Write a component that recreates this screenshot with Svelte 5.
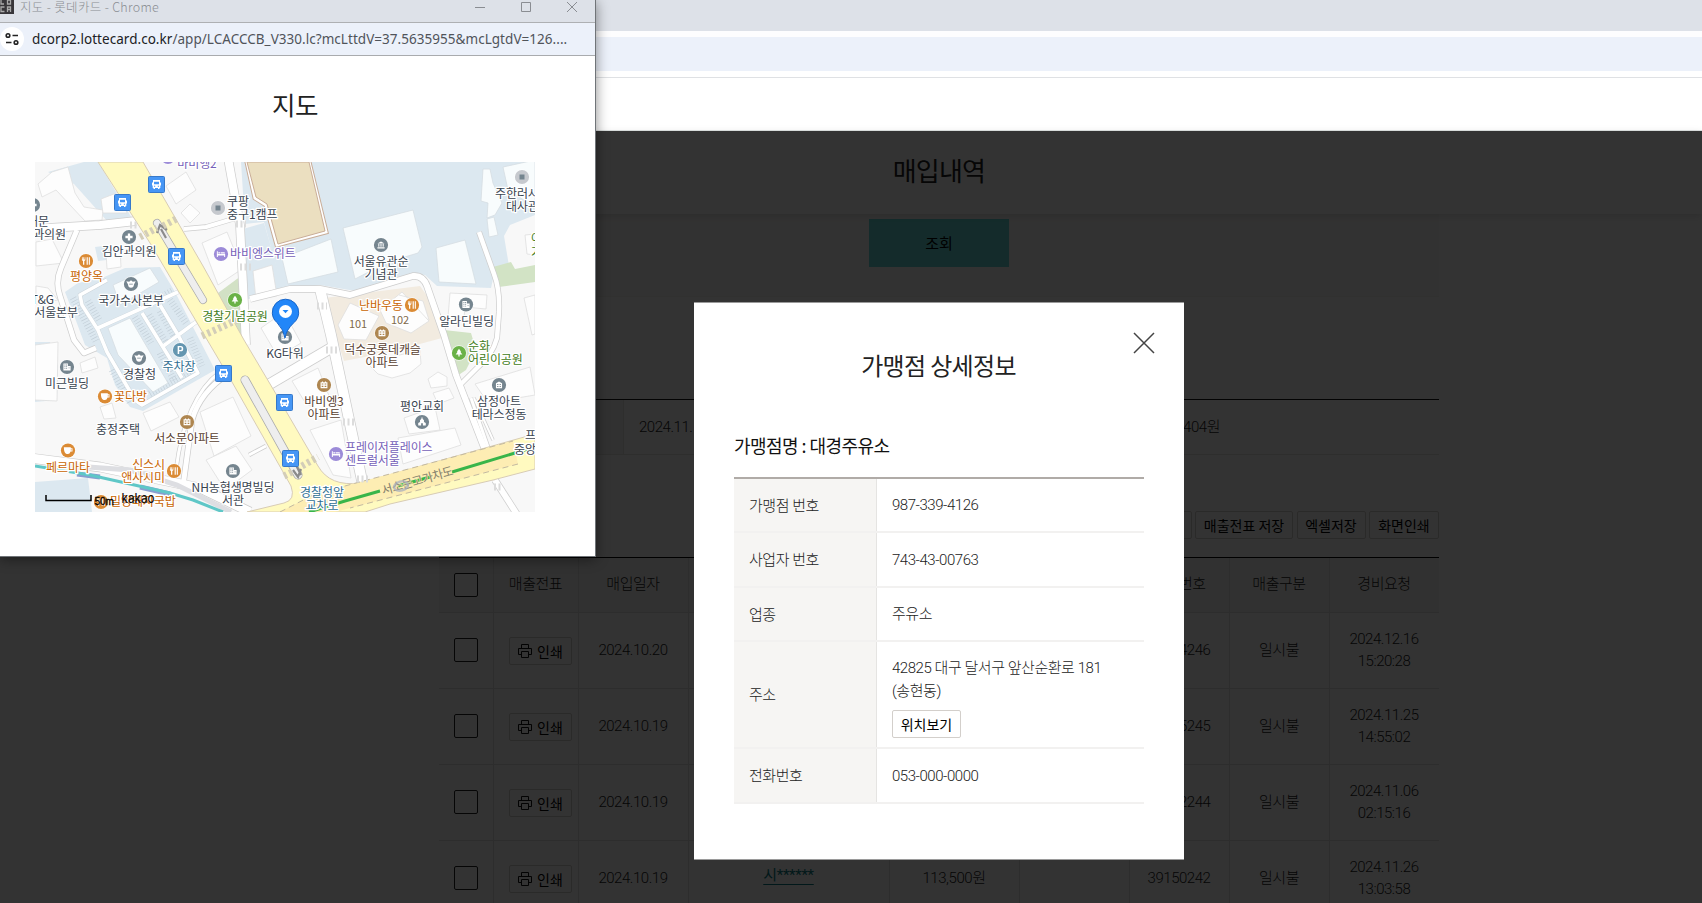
<script>
  const info = [
    ['가맹점 번호', '987-339-4126'],
    ['사업자 번호', '743-43-00763'],
    ['업종', '주유소']
  ];

  const rows = [
    { date: '2024.10.20', name: '', amount: '', no: '39154246', day: '2024.12.16', time: '15:20:28' },
    { date: '2024.10.19', name: '', amount: '', no: '39155245', day: '2024.11.25', time: '14:55:02' },
    { date: '2024.10.19', name: '', amount: '', no: '39152244', day: '2024.11.06', time: '02:15:16' },
    { date: '2024.10.19', name: '시******', amount: '113,500원', no: '39150242', day: '2024.11.26', time: '13:03:58' }
  ];

  const minor = [
    ['M228 158L240 225L246 345', 8],
    ['M30 229L100 225L136 221', 8],
    ['M77 230L61 268Q55 282 60 296L74 340L84 353L96 348', 5],
    ['M184 229L206 227L236 218', 4],
    ['M250 299L290 289L320 289L350 295L413 276Q423 275 427 286L444 335L456 375L485 450', 6],
    ['M320 289L331 335L364 490', 10],
    ['M479 232L494 274Q500 290 499 312L497 338Q492 356 478 367L460 385', 4.5],
    ['M268 385L331 348', 10],
    ['M30 458L100 467L200 488L250 512', 9],
    ['M228 374Q200 392 192 420L183 486', 5],
    ['M220 372Q185 398 176 470', 3],
    ['M495 480L518 516', 6],
    ['M471 398L488 447', 3],
    ['M474 398L493 440', 2],
    ['M249 455L266 446', 3]
  ];

  const buildings = [
    '38,184 52,172 68,167 75,193 84,207 103,210 102,220 85,221 56,190 42,197',
    '101,199 119,192 127,213 103,213', '166,186 186,172 196,190 176,204', '181,213 190,204 200,213 190,223',
    '202,243 227,232 242,269 218,285', '253,271 272,265 277,296 256,300', '106,252 120,249 121,267 107,269',
    '36,242 52,239 64,263 36,266', '36,286 48,288 58,300 36,304', '80,363 95,357 98,368 82,373',
    '100,407 112,403 116,418 104,419', '143,413 170,402 179,417 151,431', '200,412 233,397 251,436 214,456',
    '206,460 236,446 252,470 225,490', '261,328 284,312 301,343 278,357', '292,381 318,368 337,416 306,404',
    '310,430 341,420 351,478 333,475', '428,379 438,372 447,377 447,386 431,388', '433,393 449,388 454,398 438,404',
    '404,418 435,407 440,430 409,434', '398,438 455,428 461,445 403,464', '475,384 530,367 535,395 488,403',
    '450,293 487,295 486,309 465,307 464,318 448,317', '524,298 535,295 535,334 532,335',
    '367,363 420,350 421,364 410,373 392,378 378,374', '35,345 58,342 57,401 35,400', '525,235 535,234 535,255 527,254'
  ];

  const paleBuildings = [
    '343,228 413,210 422,247 418,253 388,262 355,279', '282,258 331,239 338,272 288,284',
    '436,248 465,240 476,284 439,282', '483,169 490,169 493,183 502,203 495,215 487,218 488,203 481,201',
    '487,219 494,217 498,235 489,237', '503,167 535,160 535,207 508,190', '113,285 150,268 159,282 120,305',
    '108,328 130,318 168,383 153,392 118,355'
  ];

  const labels = [
    ['바비엥2', 197, 168, 'p', 'm'],
    ['쿠팡', 227, 206, 'g', 's'], ['중구1캠프', 227, 219, 'g', 's'],
    ['대문', 49, 226, 'g', 'e'], ['과의원', 66, 239, 'g', 'e'],
    ['김안과의원', 129, 256, 'g', 'm'], ['평양옥', 86.5, 281, 'o', 'm'],
    ['국가수사본부', 131, 304.5, 'g', 'm'], ['T&G', 54, 304, 'g', 'e'], ['서울본부', 78, 317, 'g', 'e'],
    ['바비엥스위트', 230, 257.5, 'p', 's'], ['경찰기념공원', 235, 320.5, 'n', 'm'],
    ['서울유관순', 381, 265.5, 'g', 'm'], ['기념관', 381, 278.5, 'g', 'm'],
    ['주한러시아', 495, 198, 'g', 's'], ['대사관', 506, 211, 'g', 's'],
    ['난바우동', 359, 309.5, 'o', 's'], ['알라딘빌딩', 466.5, 326, 'g', 'm'],
    ['어', 531, 243, 'n', 's'], ['가', 531, 257, 'n', 's'],
    ['미근빌딩', 67, 387.5, 'g', 'm'], ['경찰청', 139.5, 379, 'g', 'm'], ['주차장', 179, 371, 'b', 'm'],
    ['꽃다방', 114, 401, 'o', 's'], ['충정주택', 118, 434, 'g', 'm'], ['서소문아파트', 187, 442.5, 'w', 'm'],
    ['페르마타', 68, 471.5, 'o', 'm'], ['신스시', 165, 468.5, 'o', 'e'], ['앤사시미', 165, 481.5, 'o', 'e'],
    ['밀양돼지국밥', 110, 506, 'o', 's'], ['NH농협생명빌딩', 233, 492, 'g', 'm'], ['서관', 233, 505, 'g', 'm'],
    ['KG타워', 285, 358, 'g', 'm'], ['덕수궁롯데캐슬', 382.5, 354, 'w', 'm'], ['아파트', 382, 366.5, 'w', 'm'],
    ['순화', 468, 350.5, 'n', 's'], ['어린이공원', 468, 363.5, 'n', 's'],
    ['바비엥3', 324, 406, 'w', 'm'], ['아파트', 324, 418.5, 'w', 'm'], ['평안교회', 422, 411, 'g', 'm'],
    ['삼정아트', 499, 405.5, 'g', 'm'], ['테라스정동', 499, 418.5, 'g', 'm'],
    ['프라이빗', 525, 440, 'g', 's'], ['중앙빌딩', 514, 453.5, 'g', 's'],
    ['프레이저플레이스', 345, 451.5, 'p', 's'], ['센트럴서울', 345, 464.5, 'p', 's'],
    ['경찰청앞', 322, 497, 'b', 'm'], ['교차로', 322, 510, 'b', 'm']
  ];
  const ink = { g: '#39444f', p: '#7560b8', o: '#c86400', n: '#3f7c20', b: '#316f92', w: '#58402f' };
  const anchor = { s: 'start', m: 'middle', e: 'end' };

  const marks = [
    ['plus', 33, 205, '#75858f'], ['plus', 129, 237, '#75858f'], ['police', 131, 284, '#75858f'],
    ['dot', 218, 208, '#c6c9ce'], ['museum', 381, 245, '#75858f'], ['dot', 522, 177, '#c6c9ce'],
    ['tower', 466, 304.5, '#75858f'], ['tower', 67, 367, '#75858f'], ['police', 139, 358, '#75858f'],
    ['tower', 233, 471, '#75858f'], ['church', 422, 422, '#75858f'], ['home', 499, 385, '#75858f'],
    ['tower', 285, 337, '#75858f'], ['park', 180, 350, '#6496b0'], ['food', 86, 261, '#db8b35'],
    ['food', 412, 305, '#db8b35'], ['cup', 105, 396.5, '#db8b35'], ['cup', 68, 450.5, '#db8b35'],
    ['food', 174, 471, '#db8b35'], ['food', 101, 502, '#db8b35'], ['apt', 382, 333, '#ae8650'],
    ['apt', 187, 422, '#ae8650'], ['apt', 324, 385, '#ae8650'], ['bed', 221, 254, '#9c8bd8'],
    ['bed', 336, 454, '#9c8bd8'], ['bed', 168, 157, '#9c8bd8'], ['tree', 235, 300, '#6ab247'], ['tree', 459, 353, '#6ab247']
  ];
  const glyph = {
    plus: 'M-1.3-4H1.3V-1.3H4V1.3H1.3V4H-1.3V1.3H-4V-1.3H-1.3Z',
    police: 'M-5.2-3L-2-2.500L0-4.200L2-2.500L5.2-3L3.300 .6Q3 4.200 0 4.200Q-3 4.200-3.300 .6ZM-2-.4V.6H2V-.4Z',
    museum: 'M0-4L4-1.8H-4ZM-3-1H-1.8V2H-3ZM-.6-1H.6V2H-.6ZM1.8-1H3V2H1.8ZM-4 2.5H4V3.8H-4Z',
    tower: 'M-4-4H1V-1H4V4H-4ZM-2.8-2.8V-1.8H-1.8V-2.8ZM-.9-2.8V-1.8H.1V-2.8ZM-2.8-.8V.2H-1.8V-.8ZM-.9-.8V.2H.1V-.8ZM-2.8 1.3V2.3H-1.8V1.3ZM-.9 1.3V2.3H.1V1.3ZM1.8 .5V1.5H2.8V.5Z',
    church: 'M-.6-5H.6V-3.600L2.2-2V0L4.200 1V3.8H1V1.5H-1V3.8H-4.200V1L-2.2 0V-2L-.6-3.600Z',
    home: 'M-3.4-2L0-4L3.4-2V3.7H-3.4ZM-2-1.2V0H-.7V-1.2ZM.7-1.2V0H2V-1.2ZM-2 1V2.2H-.7V1ZM.7 1V2.2H2V1Z',
    apt: 'M-3.8-3H-2.3V-4H-1V-3H1V-4H2.3V-3H3.8V3.6H-3.8ZM-2.6-1.8V-.5H-.7V-1.8ZM.7-1.8V-.5H2.6V-1.8ZM-2.6 .8V2.1H-.7V.8ZM.7 .8V2.1H2.6V.8Z',
    food: 'M-4.500-4.2H-3.700V-1.8H-3V-4.2H-2.200V-1.8H-1.500V-4.2H-.7V-.8L-1.9 .1V4.2H-3.300V.1L-4.500-.8ZM.7-4.2H2V4.2H.7ZM3.100-4.2H4.300V4.2H3.100Z',
    cup: 'M-4.600-3.500H3.100V-2.500H5V1H2.9Q1.900 3.900 0 3.900H-1.5Q-4.600 3.200-4.600-3.500ZM3.100-1.500V0H4V-1.500Z',
    bed: 'M-4.6-3H-3.5V.1H4.6V3.2H3.5V1.8H-3.5V3.2H-4.6ZM-3-1.9H-1V-.6H-3ZM-.4-1.9H3.4Q4.5-1.9 4.5-.6H-.4Z',
    tree: 'M0-4.8L2.4-1.5H1.5L3.7 1.8H.7V4H-.7V1.8H-3.7L-1.5-1.5H-2.4Z',
    park: 'M-2.600-4.500H1Q3.600-4.500 3.600-1.500T1 1.500H-.9V4.500H-2.600ZM-.9-3V0H.7Q1.900 0 1.900-1.500T.7-3Z'
  };
  const buses = [[156.5, 184.5], [122.5, 202.5], [176.5, 256.5], [223.5, 373.5], [284.5, 402.5], [290.5, 458.5]];
</script>

<main class="desktop">
  <div class="tabs"></div>
  <div class="address"></div>
  <div class="blank"></div>

  <section class="page">
    <header><h1>매입내역</h1></header>
    <div class="wrap">
      <div class="filter"><button class="search">조회</button></div>
      <div class="summary"><span class="shead"></span><span class="sdate">2024.11.</span><span class="ssum">1,404원</span></div>
      <div class="actions">
        <button class="mini">전체 인쇄</button>
        <button class="mini" style:width="98px">매출전표 저장</button>
        <button class="mini" style:width="69px">엑셀저장</button>
        <button class="mini" style:width="70px">화면인쇄</button>
      </div>
      <div class="list">
        <div class="row head">
          <div><i class="check"></i></div><div>매출전표</div><div>매입일자</div><div>가맹점명</div><div>매입금액</div><div></div><div>승인번호</div><div>매출구분</div><div>경비요청</div>
        </div>
        {#each rows as r}
          <div class="row">
            <div><i class="check"></i></div>
            <div class="pr"><button class="print">
              <svg width="14" height="14" viewBox="0 0 14 14" fill="none" stroke="#111"><path d="M3.5 4V.5h7V4M3.5 10.500H.5v-6h13v6h-3M3.500 7.500h7v6h-7z" /></svg>인쇄</button></div>
            <div>{r.date}</div>
            <div class="link"><u>{r.name}</u></div>
            <div>{r.amount}</div><div></div>
            <div>{r.no}</div><div>일시불</div>
            <div>{r.day}<br />{r.time}</div>
          </div>
        {/each}
      </div>
    </div>
    <div class="dim"></div>
  </section>

  <section class="modal">
    <svg class="close" width="22" height="22" viewBox="0 0 22 22" stroke="#444" stroke-width="1.5"><path d="M1 1l20 20M21 1L1 21" /></svg>
    <h2>가맹점 상세정보</h2>
    <h3>가맹점명 : 대경주유소</h3>
    <dl>
      {#each info as [k, v], i}
        <div class="item" class:short={i !== 1}><dt>{k}</dt><dd>{v}</dd></div>
      {/each}
      <div class="item addr"><dt>주소</dt><dd><p>42825 대구 달서구 앞산순환로 181<br />(송현동)</p><button class="where">위치보기</button></dd></div>
      <div class="item"><dt>전화번호</dt><dd>053-000-0000</dd></div>
    </dl>
  </section>

  <section class="popup">
    <div class="titlebar">
      <svg class="fav" width="16" height="14" viewBox="0 0 16 14"><rect width="16" height="14" fill="#38363a" /><path d="M3 0v4h3M9.500 0h3v4h-3zM6.500 7H3v4.500h3.500M9.500 12V7h3v5M9.500 9.500h3" fill="none" stroke="#aaa" stroke-width="1.300" /></svg>
      <span>지도 - 롯데카드 - Chrome</span>
      <svg class="ctl" width="104" height="14" viewBox="0 0 104 14" fill="none" stroke="#8a8d92" stroke-width="1"><path d="M1 7.500h10M47.500 2.500h9v9h-9zM93 2l10 10M103 2L93 12" /></svg>
    </div>
    <div class="urlbar">
      <span class="site"><svg width="14" height="14" viewBox="0 0 14 14" fill="none" stroke="#222" stroke-width="1.600"><circle cx="3" cy="3.500" r="1.800" /><path d="M7.500 3.500H13M1 10.500h5.500" /><circle cx="11" cy="10.500" r="1.800" /></svg></span>
      <span class="url"><b>dcorp2.lottecard.co.kr</b>/app/LCACCCB_V330.lc?mcLttdV=37.5635955&amp;mcLgtdV=126....</span>
    </div>
    <h2>지도</h2>
    <svg class="map" width="500" height="350" viewBox="35 162 500 350">
      <rect x="35" y="162" width="500" height="350" fill="#f8f8f8" />
      <g fill="#dce8f0">
        <path d="M84 162H98L133 220L108 222L74 184L60 178L48 172Z" />
        <path d="M241 162H535V215L510 225L504 236L509 266L495 270L491 288L437 286L425 275L410 274L355 291L320 285L283 291L264 222L245 224Z" />
        <path d="M65 292L78 283L102 278L125 268L160 267L175 292L215 370L143 411L130 407L115 385L107 358L85 345L75 318Z" />
        <path d="M95 247L111 245L115 259L98 261ZM35 342H50L58 365L57 400L35 402ZM35 482L88 478L92 512H35Z" />
        <path d="M236 231L264 223L284 291L248 299Z" />
      </g>
      <path d="M218 293L241 276L246 342L230 318Z" fill="#d2e1c5" />
      <path d="M493 267L511 262L515 269L535 265V282L499 287ZM444 330L471 333L476 350L466 370L457 376Z" fill="#d2e3c5" />
      <path d="M324 298L420 286L430 300L442 338L390 352L344 361Z" fill="#f2ebe0" />
      <path d="M247 162H309L326 232L277 245L266 205L255 198Z" fill="#ebdfc0" stroke="#c9ad98" stroke-width="5" />
      <path d="M247 162H309L326 232L277 245L266 205L255 198Z" fill="#ebdfc0" stroke="#fff" stroke-width="3" />
      <path d="M247 162H309L325 231L278 244L267 204L256 197Z" fill="#ebdfc0" stroke="#c9ad98" stroke-width="1" />
      <g fill="#fdfdfd" stroke="#dedede" stroke-width=".8">{#each buildings as p}<polygon points={p} />{/each}
        <path d="M338 325L350 303L379 316L366 340L344 339ZM380 310L402 292L429 321L411 333L386 323ZM399 295L423 301L429 320" /></g>
      <g fill="none" stroke="#c3cfd8" stroke-width="7" stroke-dasharray=".7 2.300">
        <path d="M73 298L97 343M88 301L99 320M112 370L130 402M135 317L151 343M149 315L166 343M160 311L174 336M170 300L186 323M190 338L202 366M160 353L174 380M145 306L172 291M150 394L190 371" />
      </g>
      <g fill="#f8fcfd" stroke="#d5dde2" stroke-width=".8">{#each paleBuildings as p}<polygon points={p} />{/each}</g>
      <g fill="none" stroke-linejoin="round">
        <path d="M107 280L80 295L82 305L98 330L107 352L135 400L142 405L198 373L178 335L160 305M98 328L178 292M142 313L182 378M162 347L196 322" stroke="#ccd5db" stroke-width="4.600" />
        <path d="M107 280L80 295L82 305L98 330L107 352L135 400L142 405L198 373L178 335L160 305M98 328L178 292M142 313L182 378M162 347L196 322" stroke="#fff" stroke-width="3.600" />
        {#each minor as [d, w]}<path {d} stroke="#cdcdcd" stroke-width={w + 1.400} />{/each}
        {#each minor as [d, w]}<path {d} stroke="#fff" stroke-width={w} />{/each}
      </g>
      <path d="M60 465L130 470L177 485L231 512" fill="none" stroke="#dddee2" stroke-width="5" />
      <path d="M77 474L100 477M140 487L170 494" stroke="#879ed0" stroke-width="5" />
      <path d="M35 466L90 475L170 493L193 500L223 512" fill="none" stroke="#5fc7c7" stroke-width="3" />
      <path d="M98 162H143L203 266L244 340L276 394L318 466Q330 487 360 483L535 434V469L493 480L390 504L365 512H247L284 503Q296 500 291 486L232 382L150 243Z" fill="#fffac0" stroke="#d8ccb5" stroke-width="1" />
      <path d="M280 512L315 494L513 441L518 464L350 508L335 512Z" fill="#fdedb3" />
      <path d="M280 512L315 494L513 441M518 464L350 508" fill="none" stroke="#c3b9a1" stroke-dasharray="6 4" />
      <path d="M309 512L345 501L380 491M398 486L430 477M452 472L535 447" fill="none" stroke="#39b54a" stroke-width="3" />
      <g fill="none" stroke-linecap="round"><path d="M157 223L203 300" stroke="#aaa" stroke-width="8" /><path d="M157 223L203 300" stroke="#eee" stroke-width="6.500" />
        <path d="M245 380L298 475" stroke="#aaa" stroke-width="9" /><path d="M245 380L298 475" stroke="#eee" stroke-width="7.500" /></g>
      <path d="M166 238L161 229M157 233L160 225L167 230M301 475L296 465M293 470L298 477L301 469" stroke="#8b8b8b" stroke-width="2.200" fill="none" />
      <g stroke="#d3cdb8" stroke-width="7" stroke-dasharray="3 3"><path d="M140 237L157 228M163 226L178 218M202 336L237 320M284 476L294 471M302 466L318 457" /></g>
      <g stroke="#dcdcdc" stroke-width="7" stroke-dasharray="2 2.500"><path d="M236 224h10M240 267h12M317 306h10M326 350h12M343 422h12M357 479h12M130 225h8M494 487h8" /></g>

      {#each marks as [kind, x, y, c]}
        <g transform="translate({x} {y})">
          <circle r="7.800" fill="#fff" opacity=".7" /><circle r="7.100" fill={c} />
          {#if kind === 'dot'}<rect x="-2.500" y="-2.500" width="5" height="5" fill="#75858f" />
          {:else}<path d={glyph[kind]} fill="#fff" fill-rule="evenodd" transform="scale(.9)" />{/if}
        </g>
      {/each}
      {#each buses as [x, y]}
        <g transform="translate({x} {y})">
          <rect x="-8" y="-8" width="16" height="16" rx="1" fill="#4696f5" stroke="#3679ca" />
          <path d="M-3.500-4.500H3.500V-2H4.500V1H3.800V3.500H3V4.500H1.500V3.500H-1.500V4.500H-3V3.500H-3.800V1H-4.500V-2H-3.500ZM-2.500-2.800V-.3H2.500V-2.800ZM-2.500 1.300V2.300H-1.300V1.300ZM1.300 1.300V2.300H2.500V1.300Z" fill="#fff" fill-rule="evenodd" />
        </g>
      {/each}
      <g class="names">
        {#each labels as [t, x, y, c, a]}<text {x} {y} fill={ink[c]} text-anchor={anchor[a]}>{t}</text>{/each}
        <text x="358" y="328" fill="#80694c" text-anchor="middle" font-size="11">101</text>
        <text x="400" y="324" fill="#80694c" text-anchor="middle" font-size="11">102</text>
        <text class="road" x="383" y="495" fill="#85816d" transform="rotate(-16 383 495)" textLength="74">서소문고가차도</text>
      </g>
      <ellipse cx="401" cy="486" rx="7" ry="4.500" fill="none" stroke="#a9b0bd" stroke-width="2.500" opacity=".75" transform="rotate(-15 401 486)" />
      <path d="M285 338Q284 330 277 322.500A13.200 13.200 0 1 1 294 322.500Q286 330 285 338Z" fill="#2286f8" stroke="#1765c9" />
      <circle cx="285.500" cy="311.500" r="6.500" fill="#fff" /><path d="M282.500 310h6l-3 3.200z" fill="#2286f8" />
      <path d="M46 495V500.500H91V495" fill="none" stroke="#000" stroke-width="1.500" />
      <text class="scale" x="94.500" y="504.500">50m</text>
      <text class="kakao" x="121.500" y="503" textLength="33" lengthAdjust="spacingAndGlyphs">kakao</text>
    </svg>
  </section>
</main>

<style>
  :global(body) { margin: 0; overflow: hidden; }
  .desktop, .desktop * { box-sizing: border-box; }
  .desktop { position: relative; width: 1702px; height: 903px; overflow: hidden; background: #fff; display: flex; flex-direction: column; color: #222; font: 300 15px/22px Roboto, "Noto Sans CJK KR", sans-serif; letter-spacing: -.45px; }
  h1, h2, h3, dl, dd, p { margin: 0; }
  button { font: 400 14px/20px "Noto Sans CJK KR", sans-serif; letter-spacing: 0; color: #000; background: #fff; padding: 0; border: 1px solid #d3cfcb; border-radius: 2px; white-space: nowrap; }
  .tabs { height: 31px; flex: none; background: #dde1e8; }
  .address { height: 40px; flex: none; border-top: 6px solid #fdfdfe; background: #ecf1fa; }
  .blank { height: 60px; flex: none; border-bottom: 1px solid #dfe3e2; background: linear-gradient(#fff 6px, #dfe1e4 6px, #dfe1e4 7px, #fff 7px); }

  .page { position: relative; height: 772px; }
  .dim { position: absolute; inset: 0; background: rgba(0, 0, 0, .8); }
  header { height: 83px; display: flex; justify-content: center; padding-top: 21px; padding-left: 176px; box-shadow: 0 2px 8px rgba(0, 0, 0, .13); position: relative; }
  h1 { font: 400 26px/36px "Noto Sans CJK KR", sans-serif; letter-spacing: -.8px; }
  .wrap { width: 1000px; margin-left: 439px; }
  .filter { height: 83px; background: #fbfaf9; border-bottom: 1px solid #f3f2f1; display: flex; justify-content: center; align-items: flex-start; padding-top: 5px; }
  .search { width: 140px; height: 48px; border: 0; border-radius: 0; background: #64d8d6; font-size: 15px; }
  .summary { margin-top: 102px; height: 56px; border-top: 1px solid #111; border-bottom: 1px solid #e5e3e1; display: flex; align-items: center; }
  .shead { width: 185px; height: 54px; background: #f6f5f3; border-right: 1px solid #e5e3e1; }
  .sdate { width: 500px; padding-left: 15px; }
  .ssum { width: 96px; text-align: right; }
  .actions { margin-top: 56px; display: flex; justify-content: flex-end; gap: 3.500px; }
  .mini { height: 28px; width: 70px; }
  .list { margin-top: 18px; border-top: 1px solid #000; }
  .row { display: grid; grid-template-columns: 55px 85px 110px 201px 130px 110px 100px 100px 109px; height: 76px; border-bottom: 1px solid #e2e0de; text-align: center; }
  .row > div { display: flex; justify-content: center; align-items: center; border-right: 1px solid #e2e0de; padding: 0 1px 1px 0; }
  .row > div:last-child { border-right: 0; }
  .head { height: 55px; background: #f6f5f3; }
  .head > div { padding-bottom: 3px; }
  .check { width: 24px; height: 24px; border: 1px solid #222; border-radius: 2px; background: #fff; }
  .head .check { margin-top: 2px; }
  .row > .pr { justify-content: flex-start; padding: 1px 0 0 15px; }
  .print { width: 63px; height: 28px; display: flex; align-items: center; justify-content: center; gap: 5px; flex: none; }
  .row > .link { color: #067a80; font-weight: 400; padding-bottom: 8px; }
  .link u { text-underline-offset: 4px; letter-spacing: -.3px; }

  .modal { position: absolute; left: 694px; top: 302px; width: 490px; height: 558px; background: #fff; border: solid #9a9a9a; border-width: 1px 0; padding: 44px 41px 0 40px; }
  .close { position: absolute; right: 29px; top: 29px; }
  .modal h2 { text-align: center; font: 400 24px/36px "Noto Sans CJK KR", sans-serif; letter-spacing: -.65px; color: #222; }
  .modal h3 { margin-top: 48px; font: 400 18px/28px "Noto Sans CJK KR", sans-serif; letter-spacing: -.54px; color: #111; }
  dl { margin: 18px -1px 0 0; border-top: 2px solid #b0aba7; }
  .item { display: grid; grid-template-columns: 143px 1fr; height: 55px; border-bottom: 2px solid #f2f1f0; }
  .item.short { height: 54px; }
  .item.addr { height: 107px; }
  dt { background: #f6f5f3; border-right: 1px solid #e5e4e2; padding: 1px 0 0 15px; display: flex; align-items: center; color: #222; }
  dd { padding: 0 0 0 15px; display: flex; align-items: center; color: #222; }
  .addr dd { flex-direction: column; align-items: flex-start; justify-content: center; padding-top: 5px; gap: 6px; }
  .addr p { line-height: 23.500px; }
  .where { width: 69px; height: 28px; }

  .popup { position: absolute; left: 0; top: 0; width: 596px; height: 557px; background: #fff; border: solid #707478; border-width: 0 1px 1px 0; box-shadow: 0 2px 12px rgba(0, 0, 0, .45); }
  .titlebar { height: 23px; background: #dde1e8; border-bottom: 1px solid #aeb0b3; display: flex; padding-right: 17px; color: #8b8e93; font: 300 12.500px/14px "Noto Sans CJK KR", sans-serif; letter-spacing: .32px; }
  .titlebar span { margin-left: 6px; }
  .fav { margin-left: -2px; }
  .ctl { margin-left: auto; }
  .urlbar { height: 33px; background: #ecf1fa; border-bottom: 1px solid #a9abae; display: flex; align-items: center; gap: 8px; }
  .site { width: 24px; height: 24px; border-radius: 50%; background: #fff; display: flex; align-items: center; justify-content: center; }
  .url { font: 400 13.500px/20px "Noto Sans", sans-serif; letter-spacing: .04px; color: #50545a; white-space: nowrap; }
  .url b { font-weight: 400; color: #202124; }
  .popup h2 { padding: 30px 5px 0 0; text-align: center; font: 400 25.500px/36px "Noto Sans CJK KR", sans-serif; letter-spacing: -.5px; color: #222; }
  .map { display: block; margin: 40px 0 0 35px; overflow: hidden; }
  .names text { font-family: "Noto Sans CJK KR", sans-serif; font-weight: 400; letter-spacing: -.1px; stroke: #fff; stroke-width: 2.500px; stroke-linejoin: round; paint-order: stroke; }
  .names text:not([font-size]) { font-size: 12px; }
  .names .road { stroke: #fdedb3; stroke-width: 1px; }
  .scale { font: 400 10px "Liberation Sans", sans-serif; letter-spacing: 0; stroke: #000; stroke-width: .3px; }
  .kakao { font: 500 13px Inter, sans-serif; letter-spacing: 0; fill: #111; }
</style>
